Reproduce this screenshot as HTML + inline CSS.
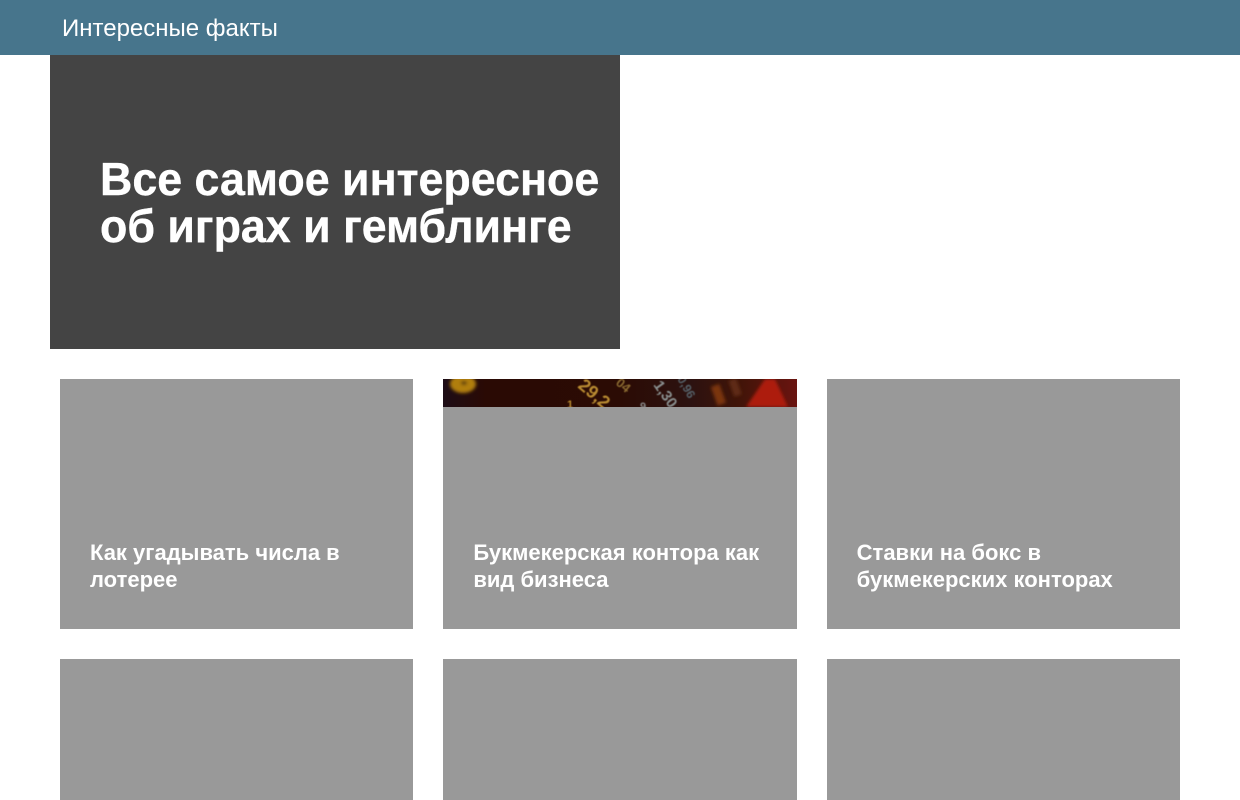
<!DOCTYPE html>
<html lang="ru">
<head>
<meta charset="utf-8">
<title>Интересные факты</title>
<style>
html,body{margin:0;padding:0;background:#fff;}
body{width:1240px;height:800px;overflow:hidden;position:relative;font-family:"Liberation Sans",sans-serif;}
.top{position:absolute;left:0;top:0;width:1240px;height:55px;background:#47758c;}
.brand{position:absolute;left:62px;top:15px;font-size:24px;line-height:28px;color:#fff;white-space:nowrap;}
.hero{position:absolute;left:50px;top:55px;width:570px;height:294px;background:#444;}
.hero h1{position:absolute;left:50px;top:101px;margin:0;font-size:46px;line-height:47px;font-weight:700;color:#fff;white-space:nowrap;transform:scaleX(.973);transform-origin:0 0;-webkit-text-stroke:.4px #fff;}
.card{position:absolute;width:353.33px;background:#999;}
.card h2{position:absolute;left:30px;top:160px;margin:0;font-size:22px;line-height:27px;font-weight:700;color:#fff;white-space:nowrap;}
.c1{left:60px}.c2{left:443.33px}.c3{left:826.67px}
.r1{top:379px;height:250px}.r2{top:659px;height:141px}
.strip{position:absolute;left:0;top:0;width:354px;height:28px;display:block;}
</style>
</head>
<body>
<div class="top"><div class="brand">Интересные факты</div></div>
<div class="hero"><h1>Все самое интересное<br>об играх и гемблинге</h1></div>

<div class="card c1 r1"><h2>Как угадывать числа в<br>лотерее</h2></div>
<div class="card c2 r1">
<svg class="strip" viewBox="0 0 354 28" xmlns="http://www.w3.org/2000/svg">
<defs>
<linearGradient id="g" x1="0" x2="1" y1="0" y2="0">
<stop offset="0" stop-color="#1d0d16"/>
<stop offset=".12" stop-color="#2a0a04"/>
<stop offset=".5" stop-color="#2b0b04"/>
<stop offset=".7" stop-color="#2c1210"/>
<stop offset=".83" stop-color="#3f1408"/>
<stop offset="1" stop-color="#6a1410"/>
</linearGradient>
<filter id="b"><feGaussianBlur stdDeviation="1.6"/></filter>
<filter id="s"><feGaussianBlur stdDeviation=".6"/></filter>
</defs>
<rect width="354" height="28" fill="url(#g)"/>
<g filter="url(#b)">
<ellipse cx="20" cy="5" rx="13" ry="9" fill="#b07e0e"/>
<ellipse cx="21" cy="4" rx="3" ry="2" fill="#5a3a08"/>
<path d="M303 28L322 0H332L345 28Z" fill="#ad1f0c"/>
<rect x="271" y="6" width="9" height="20" fill="#7a3410" transform="rotate(-20 275 16)"/>
<rect x="288" y="0" width="8" height="17" fill="#5e2a12" transform="rotate(-20 292 8)"/>
</g>
<g filter="url(#s)" font-family="Liberation Sans" font-weight="700">
<text x="134" y="8" font-size="18" fill="#b88a30" transform="rotate(40 134 8)">29,2</text>
<text x="172" y="5" font-size="13" fill="#8a6a30" transform="rotate(40 172 5)">04</text>
<text x="210" y="6" font-size="15" fill="#8a9090" transform="rotate(55 210 6)">1,30</text>
<text x="234" y="0" font-size="12" fill="#556068" transform="rotate(60 234 0)">0,96</text>
<text x="124" y="29" font-size="11" fill="#b88a30">1</text>
<text x="197" y="31" font-size="11" fill="#8a8a8a">9</text>
</g>
</svg>
<h2>Букмекерская контора как<br>вид бизнеса</h2>
</div>
<div class="card c3 r1"><h2>Ставки на бокс в<br>букмекерских конторах</h2></div>

<div class="card c1 r2"></div>
<div class="card c2 r2"></div>
<div class="card c3 r2"></div>
</body>
</html>
